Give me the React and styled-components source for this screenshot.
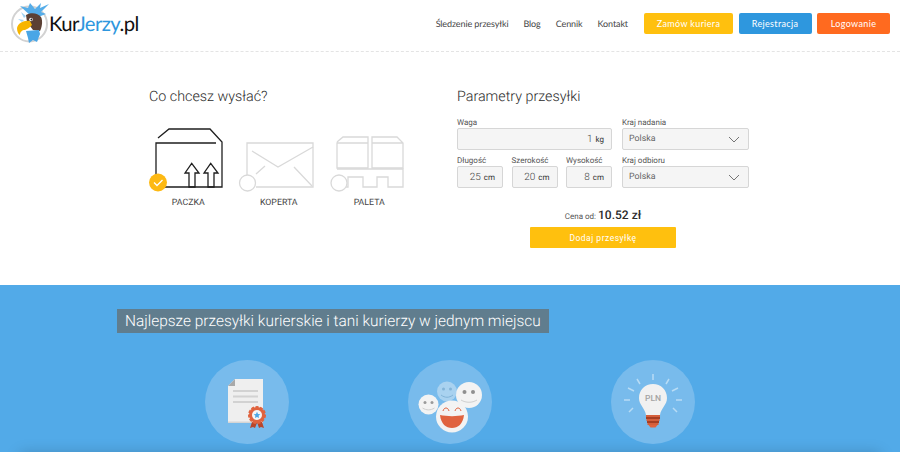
import React from 'react'
import styled, { createGlobalStyle } from 'styled-components'

const GlobalStyle = createGlobalStyle`
  html, body {
    margin: 0;
    padding: 0;
    background: #fff;
    font-family: 'Roboto', 'Liberation Sans', sans-serif;
    text-rendering: geometricPrecision;
  }
  * { box-sizing: border-box; }
`

const Chevron = () => (
  <svg width="12" height="7" viewBox="0 0 12 7">
    <path d="M1 1l5 5 5-5" fill="none" stroke="#666" strokeWidth="0.9" />
  </svg>
)

const BirdLogo = () => (
  <svg width="46" height="46" viewBox="0 0 46 46">
    <circle cx="21.500" cy="23" r="17.500" fill="#fff" stroke="#d2d2d2" strokeWidth="2" />
    <path d="M24 16L12 5l8 2 2-5 5 6 6-6-1 5 9-4-8 8 5 2-8 3z" fill="#55ade9" />
    <path d="M18 15l-5-4 3 6zM16 19l-6-1 4 3z" fill="#9fd3f4" />
    <path d="M18 14c5-3 12-2 15 2 2 4 1 10-1 14l-7-1-6-8z" fill="#5b4034" />
    <path d="M18 30c4 0 9-1 13-1l1 4-3 8-4-2-4 3-1-5z" fill="#4aa6e6" />
    <path d="M22 20c-6-1-12 2-13 7 0 3 1 6 3 7 0-3 2-5 5-5 3-1 5-3 7-5z" fill="#f7b500" />
    <circle cx="23" cy="18.500" r="1.800" fill="#fff" />
    <circle cx="23.400" cy="18.500" r="0.900" fill="#222" />
  </svg>
)

const ParcelIcon = () => (
  <svg width="90" height="66" viewBox="2 0 90 66">
    <g fill="none" stroke="#1f1f1f" strokeWidth="1.3">
      <path d="M17 10l11-9h41l12 13v45H15V15h60" />
      <path d="M50.700 35.300l-6.700 9.700h4v14h6V45h4zM69.700 35.300L63 45h4v14h6V45h4z" />
    </g>
    <circle cx="17" cy="54.500" r="9" fill="#fdb913" />
    <path d="M13 54.500l3 3 5.500-5.500" fill="none" stroke="#fff" strokeWidth="1.3" />
  </svg>
)

const EnvelopeIcon = () => (
  <svg width="90" height="66" viewBox="2 0 90 66">
    <g fill="none" stroke="#d9d9d9" strokeWidth="1.3">
      <path d="M15 50V15h66v44H24" />
      <path d="M20 23l26 16 35-20M24 46l9-8M62 39l18 19" />
      <circle cx="15.500" cy="55" r="8" fill="#fff" />
    </g>
  </svg>
)

const PalletIcon = () => (
  <svg width="90" height="66" viewBox="0 0 90 66">
    <g fill="none" stroke="#d9d9d9" strokeWidth="1.3">
      <path d="M13 14l6-5h25v6M13 15h31v25H13zM48 15V9h25l6 6v25H48zM48 15h31" />
      <path d="M13 41h66v18H64V49H53v10H39V49H24v10h-4" />
      <circle cx="15" cy="55" r="8" fill="#fff" />
    </g>
  </svg>
)

const DocumentIcon = () => (
  <svg width="84" height="84" viewBox="0 0 84 84">
    <path d="M30 19h28v44H23V26z" fill="#efefef" />
    <path d="M23 61.500h35V63H23z" fill="#d5d5d5" />
    <path d="M30 19v7h-7z" fill="#a9a9a9" />
    <path d="M28 31h25M28 36.500h25M28 42h25" stroke="#d2d2d2" strokeWidth="2" />
    <path d="M47 62l-2 6 3-1 2 1 2-5zM52 62l2 6 2-1 3 1-2-6z" fill="#b8462c" />
    <circle cx="52" cy="55" r="8" fill="#e0633f" stroke="#e0633f" strokeWidth="2" strokeDasharray="3 1.500" />
    <circle cx="52" cy="55" r="5" fill="#f4f4f4" />
    <path d="M52 51.800l1 2.200 2.300.2-1.700 1.600.5 2.300-2.100-1.200-2.100 1.200.5-2.300-1.700-1.600 2.300-.2z" fill="#4aa6e6" />
  </svg>
)

const FacesIcon = () => (
  <svg width="84" height="84" viewBox="0 0 84 84">
    <circle cx="39" cy="31.500" r="10" fill="#a9d2f0" />
    <g fill="#82b4d8">
      <circle cx="35.500" cy="29" r="1.500" />
      <circle cx="42.500" cy="29" r="1.500" />
    </g>
    <path d="M33 35c4 3 8 3 12 0" fill="none" stroke="#82b4d8" />
    <circle cx="61" cy="35" r="13" fill="#f3f3f3" />
    <g fill="#8f8f8f">
      <circle cx="56.500" cy="32" r="2" />
      <circle cx="65" cy="32" r="2" />
    </g>
    <path d="M53 40c5 3 11 3 16 0" fill="none" stroke="#cfcfcf" />
    <circle cx="20.500" cy="44.500" r="10" fill="#f3f3f3" />
    <g fill="#9a9a9a">
      <circle cx="17" cy="42.500" r="1.500" />
      <circle cx="24" cy="42.500" r="1.500" />
    </g>
    <path d="M14.500 48c4 2.500 8 2.500 12 0" fill="none" stroke="#cfcfcf" />
    <circle cx="44" cy="56.500" r="16" fill="#f3f3f3" />
    <path d="M32 55c7 1.500 17 1.500 24 0-1 9-6 13-12 13s-11-4-12-13z" fill="#e0633f" />
    <path d="M35 51c1-4 5-4 6 0M47 51c1-4 5-4 6 0" fill="none" stroke="#e0633f" strokeWidth="1" />
  </svg>
)

const BulbIcon = () => (
  <svg width="84" height="84" viewBox="0 0 84 84">
    <path
      d="M42 14v6M26 19l3 5M58 19l-3 5M17 28l6 3M67 28l-6 3M13 40h6M71 40h-6M18 52l4-4M66 52l-4-4"
      stroke="#b8dcf5"
      strokeWidth="1.500"
    />
    <path d="M42 24c8 0 14 6 14 14 0 7-6 10-7 17H35c-1-7-7-10-7-17 0-8 6-14 14-14z" fill="#f1f1f1" />
    <text x="42" y="41" textAnchor="middle" fontFamily="Roboto, sans-serif" fontWeight="500" fontSize="8.500" fill="#a3a3a3">PLN</text>
    <path d="M35 55h14v2H35zM35.500 59h13v2h-13zM36.500 63h11v2h-11z" fill="#d55f3b" />
    <path d="M35 57h14v2H35zM36 61h12v2H36z" fill="#a63e23" />
    <path d="M37.500 65h9l-2 2.500h-5z" fill="#e0633f" />
  </svg>
)

const fields = [
  { label: 'Długość', value: 25, unit: 'cm' },
  { label: 'Szerokość', value: 20, unit: 'cm' },
  { label: 'Wysokość', value: 8, unit: 'cm' },
]

const features = [DocumentIcon, FacesIcon, BulbIcon]

const App = () => (
  <>
    <GlobalStyle />
    <Page>
      <Header>
        <Logo>
          <BirdLogo />
          <LogoText>
            Kur<span>Jerzy</span>.pl
          </LogoText>
        </Logo>
        <HeaderRight>
          <Nav>
            <NavLink>Śledzenie przesyłki</NavLink>
            <NavLink>Blog</NavLink>
            <NavLink>Cennik</NavLink>
            <NavLink>Kontakt</NavLink>
          </Nav>
          <HeaderButtons>
            <HeaderButton $bg="#ffc00e" $width={89}>Zamów kuriera</HeaderButton>
            <HeaderButton $bg="#2e97de" $width={73}>Rejestracja</HeaderButton>
            <HeaderButton $bg="#ff6a1f" $width={73}>Logowanie</HeaderButton>
          </HeaderButtons>
        </HeaderRight>
      </Header>

      <Main>
        <Choice>
          <Heading>Co chcesz wysłać?</Heading>
          <Options>
            <Option>
              <ParcelIcon />
              <OptionLabel>PACZKA</OptionLabel>
            </Option>
            <Option>
              <EnvelopeIcon />
              <OptionLabel>KOPERTA</OptionLabel>
            </Option>
            <Option>
              <PalletIcon />
              <OptionLabel>PALETA</OptionLabel>
            </Option>
          </Options>
        </Choice>

        <Params>
          <Heading>Parametry przesyłki</Heading>
          <FormGrid>
            <div>
              <FieldLabel>Waga</FieldLabel>
              <Field>
                1 <Unit>kg</Unit>
              </Field>
            </div>
            <div>
              <FieldLabel>Kraj nadania</FieldLabel>
              <Select>
                Polska
                <Chevron />
              </Select>
            </div>
            <Dimensions>
              {fields.map((f) => (
                <div key={f.label}>
                  <FieldLabel>{f.label}</FieldLabel>
                  <Field>
                    {f.value} <Unit>{f.unit}</Unit>
                  </Field>
                </div>
              ))}
            </Dimensions>
            <div>
              <FieldLabel>Kraj odbioru</FieldLabel>
              <Select>
                Polska
                <Chevron />
              </Select>
            </div>
          </FormGrid>
          <Price>
            Cena od: <strong>10.52 zł</strong>
          </Price>
          <AddButton>Dodaj przesyłkę</AddButton>
        </Params>
      </Main>

      <Band>
        <BandTitle>Najlepsze przesyłki kurierskie i tani kurierzy w jednym miejscu</BandTitle>
        <Features>
          {features.map((Icon, i) => (
            <FeatureCircle key={i}>
              <Icon />
            </FeatureCircle>
          ))}
        </Features>
        <NextCard />
      </Band>
    </Page>
  </>
)

export default App

const Page = styled.div`
  width: 900px;
  height: 452px;
  overflow: hidden;
`

const Header = styled.header`
  height: 52px;
  padding: 0 10px 0 8px;
  display: flex;
  align-items: center;
  justify-content: space-between;
  border-bottom: 1px dashed #e4e4e4;
`

const Logo = styled.div`
  display: flex;
  align-items: center;
  margin-top: -3px;
`

const LogoText = styled.div`
  margin-left: -5px;
  font-family: 'Lato', sans-serif;
  font-size: 20.3px;
  letter-spacing: -0.6px;
  color: #111;

  span {
    color: #2e97de;
  }
`

const HeaderRight = styled.div`
  display: flex;
  align-items: center;
  margin-top: -4px;
`

const Nav = styled.nav`
  display: flex;
  gap: 15px;
  margin-right: 16px;
`

const NavLink = styled.a`
  font-family: 'Lato', sans-serif;
  font-size: 9px;
  letter-spacing: -0.1px;
  color: #444;
`

const HeaderButtons = styled.div`
  display: flex;
  gap: 5.5px;
`

const HeaderButton = styled.button`
  width: ${({ $width }) => $width}px;
  height: 21.5px;
  padding: 0;
  border: 0;
  border-radius: 2px;
  background: ${({ $bg }) => $bg};
  color: #fff;
  font-family: 'Lato', sans-serif;
  font-size: 9px;
  letter-spacing: 0.35px;
`

const Main = styled.main`
  height: 233px;
  padding: 35px 0 0 149px;
  display: flex;
`

const Choice = styled.section`
  width: 308px;
`

const Params = styled.section`
  width: 292px;
  display: flex;
  flex-direction: column;
`

const Heading = styled.h2`
  margin: 0;
  font-size: 14.3px;
  line-height: 20px;
  font-weight: 300;
  color: #2b2b2b;
`

const Options = styled.div`
  display: flex;
  margin: 21px 0 0 -6px;
`

const Option = styled.div`
  width: 90.5px;
  display: flex;
  flex-direction: column;
  align-items: center;
`

const OptionLabel = styled.div`
  margin-top: 3px;
  font-size: 8.8px;
  line-height: 12px;
  color: #444;
`

const FormGrid = styled.div`
  margin-top: 8px;
  display: grid;
  grid-template-columns: 155px 127px;
  column-gap: 10px;
  row-gap: 3px;
`

const Dimensions = styled.div`
  display: grid;
  grid-template-columns: repeat(3, 46px);
  justify-content: space-between;
`

const FieldLabel = styled.div`
  height: 13px;
  padding-top: 2px;
  font-size: 8px;
  line-height: 11px;
  color: #555;
`

const Field = styled.div`
  height: 22px;
  padding: 5px 7px 0;
  display: flex;
  align-items: baseline;
  justify-content: flex-end;
  gap: 3px;
  background: #f5f5f5;
  border: 1px solid #d6d6d6;
  border-radius: 2px;
  font-size: 10px;
  line-height: 12px;
  font-weight: 300;
  color: #444;
`

const Unit = styled.span`
  font-size: 8px;
  font-weight: 400;
  color: #333;
`

const Select = styled.div`
  height: 22px;
  padding: 0 8px 0 6px;
  display: flex;
  align-items: center;
  justify-content: space-between;
  background: #f5f5f5;
  border: 1px solid #d6d6d6;
  border-radius: 2px;
  font-size: 8.8px;
  color: #666;
`

const Price = styled.div`
  margin-top: 19px;
  text-align: center;
  font-size: 8px;
  line-height: 16px;
  color: #555;

  strong {
    font-size: 12px;
    font-weight: 500;
    color: #2b2b2b;
  }
`

const AddButton = styled.button`
  align-self: center;
  margin-top: 2px;
  width: 146px;
  height: 21px;
  padding: 0;
  border: 0;
  border-radius: 1px;
  background: #ffc00e;
  color: #fff;
  font-family: 'Roboto', sans-serif;
  font-size: 8.5px;
  letter-spacing: 0.5px;
`

const Band = styled.section`
  height: 167px;
  padding: 24px 0 0 117px;
  background: #52aae8;
  overflow: hidden;
`

const BandTitle = styled.h1`
  margin: 0;
  display: inline-block;
  height: 24px;
  padding: 0 8px;
  background: #607d8e;
  color: #fff;
  font-size: 15.45px;
  line-height: 24px;
  font-weight: 300;
  white-space: nowrap;
`

const Features = styled.div`
  display: flex;
  gap: 119px;
  margin: 27px 0 0 88px;
`

const FeatureCircle = styled.div`
  width: 84px;
  height: 84px;
  border-radius: 50%;
  background: #78bbec;
`

const NextCard = styled.div`
  height: 60px;
  margin: 10px 0 0 -97px;
  width: 860px;
  box-shadow: 0 0 14px rgba(0, 0, 0, 0.22);
`
